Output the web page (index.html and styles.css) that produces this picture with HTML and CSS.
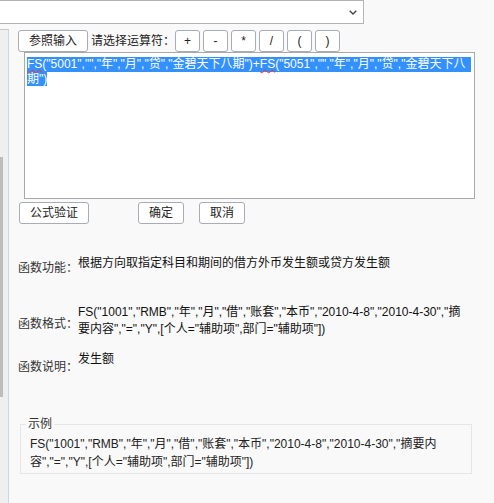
FILE: index.html
```html
<!DOCTYPE html>
<html lang="zh-CN">
<head>
    <meta charset="UTF-8">
    <meta name="viewport" content="width=device-width, initial-scale=1.0">
    <title>公式编辑</title>
    <link rel="stylesheet" href="styles.css">
</head>
<body>
<div class="topbar">
    <div class="combo">
        <svg class="chevron" width="8" height="5" viewBox="0 0 8 5"><path d="M0.7 0.7 L4 4 L7.3 0.7" fill="none" stroke="#444" stroke-width="1.4"/></svg>
    </div>
</div>
<div class="frame">
    <div class="side"><div class="thumb"></div></div>
    <div class="panel">
        <div class="toolbar">
            <button class="btn btn-wide">参照输入</button>
            <span class="hint">请选择运算符：</span>
            <button class="btn btn-op">+</button>
            <button class="btn btn-op">-</button>
            <button class="btn btn-op">*</button>
            <button class="btn btn-op">/</button>
            <button class="btn btn-op">(</button>
            <button class="btn btn-op">)</button>
        </div>
        <div class="editor">
            <div class="sel-line"><span class="typo">FS</span>("5001","","年","月","贷","金碧天下八期")+<span class="typo">FS</span>("5051","","年","月","贷","金碧天下八</div>
            <span class="sel">期")</span>
        </div>
        <div class="actions">
            <button class="btn btn-wide btn-check">公式验证</button>
            <button class="btn btn-small btn-ok">确定</button>
            <button class="btn btn-small btn-cancel">取消</button>
        </div>
        <div class="info info-func">
            <span class="info-label">函数功能：</span>
            <span class="info-value">根据方向取指定科目和期间的借方外币发生额或贷方发生额</span>
        </div>
        <div class="info info-format">
            <span class="info-label">函数格式：</span>
            <span class="info-value">FS("1001","RMB","年","月","借","账套","本币","2010-4-8","2010-4-30","摘<br>要内容","=","Y",[个人="辅助项",部门="辅助项"])</span>
        </div>
        <div class="info info-desc">
            <span class="info-label">函数说明：</span>
            <span class="info-value">发生额</span>
        </div>
        <fieldset class="sample">
            <legend>示例</legend>
            <p>FS("1001","RMB","年","月","借","账套","本币","2010-4-8","2010-4-30","摘要内<br>容","=","Y",[个人="辅助项",部门="辅助项"])</p>
        </fieldset>
    </div>
</div>
</body>
</html>
```

FILE: styles.css
```css
body { margin: 0; background: #f9f9f9; font-family: "Liberation Sans", "Noto Sans CJK SC", sans-serif; font-size: 12px; color: #111; }

.topbar { height: 29px; }
.combo { position: relative; box-sizing: border-box; width: 365px; height: 24px; margin-left: -1px; background: #fff; border: 1px solid #b4b4b4; }
.chevron { position: absolute; right: 6px; top: 9px; }

.frame { display: flex; min-height: 474px; }
.side { box-sizing: border-box; width: 9px; background: #efefef; border-top: 1px solid #c8c8c8; border-right: 1px solid #cad6e2; }
.thumb { width: 3px; height: 240px; margin-top: 127px; background: #bdbdbd; }
.panel { flex: 1; padding-top: 1px; }

.btn { box-sizing: border-box; height: 22px; padding: 0; background: #fff; border: 1px solid #a7acb6; border-radius: 3px; font: 12px/20px "Liberation Sans", "Noto Sans CJK SC", sans-serif; color: #222; }
.btn-wide { width: 70px; }
.btn-small { width: 46px; }
.btn-op { width: 25px; }

.toolbar { display: flex; align-items: center; gap: 3px; margin-left: 9px; }
.hint { margin-right: -3px; line-height: 22px; color: #222; }

.editor { box-sizing: border-box; width: 451px; height: 147px; margin-left: 15px; padding: 4px 3px 0 2px; background: #fff; border: 1px solid #a9a9a9; line-height: 15px; color: #fff; }
.sel-line, .sel { background: #3390ff; }
.sel-line { position: relative; }
.typo { text-decoration: underline wavy #ff2a2a; text-decoration-thickness: 1px; text-underline-offset: 1px; }

.actions { display: flex; margin: 3px 0 0 10px; }
.btn-ok { margin-left: 49px; }
.btn-cancel { margin-left: 15px; }

.info { display: flex; align-items: flex-start; margin-left: 9px; line-height: 17px; }
.info-label { width: 60px; flex: none; color: #333; }
.info-value { color: #111; }
.info-func { margin-top: 31px; }
.info-func .info-label { padding-top: 5px; }
.info-format { margin-top: 27px; }
.info-format .info-label { padding-top: 12px; }
.info-desc { margin-top: 13px; }
.info-desc .info-label { padding-top: 8px; }

.sample { box-sizing: border-box; width: 452px; margin: 40px 0 0 11px; padding: 0 0 2px 5px; border: 1px solid #e6e6e6; }
.sample legend { padding: 0 2px; line-height: 17px; color: #333; }
.sample p { margin: 2px 0 0 4px; line-height: 18px; color: #222; }
```
